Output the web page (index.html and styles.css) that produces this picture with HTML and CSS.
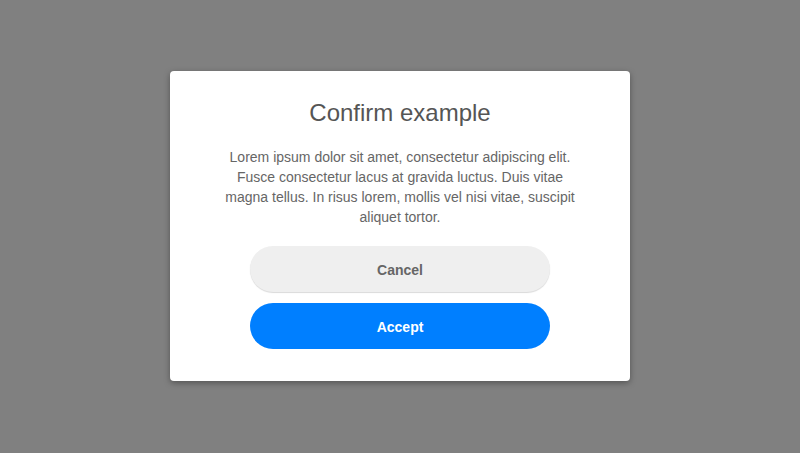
FILE: index.html
```html
<!DOCTYPE html>
<html lang="en">
<head>
    <meta charset="UTF-8">
    <meta name="viewport" content="width=device-width, initial-scale=1.0">
    <title>Confirm example</title>
    <link rel="stylesheet" href="styles.css">
</head>
<body>
    <div class="overlay">
        <div class="confirm-box">
            <h2>Confirm example</h2>
            <p>Lorem ipsum dolor sit amet, consectetur adipiscing elit. Fusce consectetur lacus at gravida luctus. Duis vitae magna tellus. In risus lorem, mollis vel nisi vitae, suscipit aliquet tortor.</p>
            <div class="actions">
                <button class="btn btn-cancel">Cancel</button>
                <button class="btn btn-accept">Accept</button>
            </div>
        </div>
    </div>
</body>
</html>
```

FILE: styles.css
```css
body {
    margin: 0;
    padding: 0;
    font-family: "Liberation Sans", Arial, sans-serif;
    background: #808080;
}

.overlay {
    height: 453px;
    display: flex;
    justify-content: center;
    padding-top: 71px;
    box-sizing: border-box;
}

.confirm-box {
    background: #fff;
    width: 460px;
    height: 310px;
    box-sizing: border-box;
    padding: 27px 50px 32px;
    border-radius: 4px;
    box-shadow: 0 2px 6px rgba(0, 0, 0, 0.35);
    text-align: center;
}

.confirm-box h2 {
    margin: 0;
    font-size: 24px;
    line-height: 30px;
    font-weight: normal;
    color: #555;
}

.confirm-box p {
    margin: 19px 0 0;
    font-size: 14px;
    line-height: 20px;
    color: #666;
}

.actions {
    margin-top: 19px;
    display: flex;
    flex-direction: column;
    align-items: center;
    gap: 11px;
}

.btn {
    width: 300px;
    height: 46px;
    padding: 2px 0 0;
    border: none;
    border-radius: 23px;
    font-family: inherit;
    font-size: 14px;
    font-weight: bold;
    cursor: pointer;
}

.btn-cancel {
    background: #efefef;
    color: #666;
    box-shadow: 0 1px 1px rgba(0, 0, 0, 0.15);
}

.btn-accept {
    background: #007fff;
    color: #fff;
}
```
